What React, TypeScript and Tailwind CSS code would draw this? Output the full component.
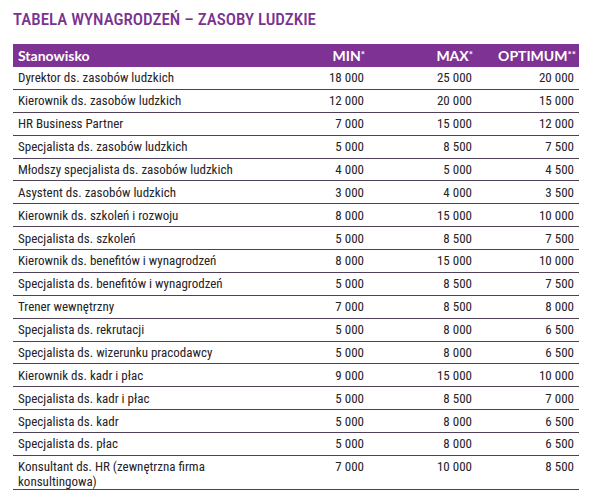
import React from 'react';

type Row = { name: string; min: string; max: string; opt: string };

const rows: Row[] = [
  { name: 'Dyrektor ds. zasobów ludzkich', min: '18 000', max: '25 000', opt: '20 000' },
  { name: 'Kierownik ds. zasobów ludzkich', min: '12 000', max: '20 000', opt: '15 000' },
  { name: 'HR Business Partner', min: '7 000', max: '15 000', opt: '12 000' },
  { name: 'Specjalista ds. zasobów ludzkich', min: '5 000', max: '8 500', opt: '7 500' },
  { name: 'Młodszy specjalista ds. zasobów ludzkich', min: '4 000', max: '5 000', opt: '4 500' },
  { name: 'Asystent ds. zasobów ludzkich', min: '3 000', max: '4 000', opt: '3 500' },
  { name: 'Kierownik ds. szkoleń i rozwoju', min: '8 000', max: '15 000', opt: '10 000' },
  { name: 'Specjalista ds. szkoleń', min: '5 000', max: '8 500', opt: '7 500' },
  { name: 'Kierownik ds. benefitów i wynagrodzeń', min: '8 000', max: '15 000', opt: '10 000' },
  { name: 'Specjalista ds. benefitów i wynagrodzeń', min: '5 000', max: '8 500', opt: '7 500' },
  { name: 'Trener wewnętrzny', min: '7 000', max: '8 500', opt: '8 000' },
  { name: 'Specjalista ds. rekrutacji', min: '5 000', max: '8 000', opt: '6 500' },
  { name: 'Specjalista ds. wizerunku pracodawcy', min: '5 000', max: '8 000', opt: '6 500' },
  { name: 'Kierownik ds. kadr i płac', min: '9 000', max: '15 000', opt: '10 000' },
  { name: 'Specjalista ds. kadr i płac', min: '5 000', max: '8 500', opt: '7 000' },
  { name: 'Specjalista ds. kadr', min: '5 000', max: '8 000', opt: '6 500' },
  { name: 'Specjalista ds. płac', min: '5 000', max: '8 000', opt: '6 500' },
];

const App: React.FC = () => {
  return (
    <div className="w-[597px] h-[500px] bg-white overflow-hidden px-[13px] pt-[9px] text-[#262226] font-['Roboto_Condensed','Roboto',sans-serif]">
      {/* Title */}
      <h1 className="text-[17px] leading-[20px] font-medium text-[#7a3291] h-[35px]">
        TABELA WYNAGRODZEŃ – ZASOBY LUDZKIE
      </h1>

      <div className="w-[566px]">
        {/* Header */}
        <div className="grid grid-cols-[248px_108px_108px_102px] h-[23px] items-center bg-[#7d3294] text-white text-[14px] font-bold font-['Lato',sans-serif]">
          <div className="pl-[5px]">Stanowisko</div>
          <div className="text-right pr-[4px]">MIN<sup className="text-[10px] top-[-0.35em]">*</sup></div>
          <div className="text-right pr-[4px]">MAX<sup className="text-[10px] top-[-0.35em]">*</sup></div>
          <div className="text-right pr-[3px]">OPTIMUM<sup className="text-[10px] top-[-0.35em]">**</sup></div>
        </div>

        {rows.map((r) => (
          <div
            key={r.name}
            className="grid grid-cols-[248px_108px_108px_102px] h-[22.88px] items-center border-b border-[#4f4159] text-[13px] leading-[15px]"
          >
            <div className="pl-[5px]">{r.name}</div>
            <div className="text-right pr-[5px]">{r.min}</div>
            <div className="text-right pr-[5px]">{r.max}</div>
            <div className="text-right pr-[5px]">{r.opt}</div>
          </div>
        ))}

        {/* Two-line last row */}
        <div className="grid grid-cols-[248px_108px_108px_102px] h-[34px] items-start pt-[3px] border-b border-[#4f4159] text-[13px] leading-[15px]">
          <div className="pl-[5px] pr-[50px]">Konsultant ds. HR (zewnętrzna firma konsultingowa)</div>
          <div className="text-right pr-[5px]">7 000</div>
          <div className="text-right pr-[5px]">10 000</div>
          <div className="text-right pr-[5px]">8 500</div>
        </div>
      </div>
    </div>
  );
};

export default App;
